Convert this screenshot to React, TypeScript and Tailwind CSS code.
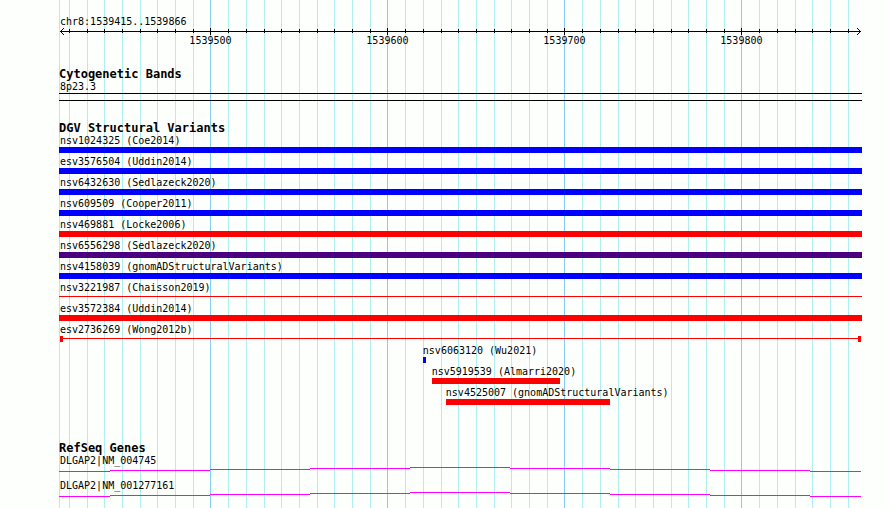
import React from "react";

interface Variant {
  name: string;
  color: string;
  start?: number;
  end?: number;
  shape?: "bar" | "line" | "capped";
}

const REGION_START = 1539415;
const REGION_END = 1539866;
const PANEL_WIDTH = 803;
const MAP_WIDTH = 800;

// Percentage offset of a base position inside the panel
const position = (bp: number) => {
  const scale = MAP_WIDTH / (REGION_END - REGION_START + 1);
  return ((1 + (bp - REGION_START) * scale) / PANEL_WIDTH) * 100;
};

const ticks: number[] = [];
for (let bp = 1539420; bp <= REGION_END; bp += 10) {
  ticks.push(bp);
}

const isMajor = (bp: number) => bp % 100 === 0;

const variants: Variant[] = [
  { name: "nsv1024325 (Coe2014)", color: "bg-[#0000ff]" },
  { name: "esv3576504 (Uddin2014)", color: "bg-[#0000ff]" },
  { name: "nsv6432630 (Sedlazeck2020)", color: "bg-[#0000ff]" },
  { name: "nsv609509 (Cooper2011)", color: "bg-[#0000ff]" },
  { name: "nsv469881 (Locke2006)", color: "bg-[#ff0000]" },
  { name: "nsv6556298 (Sedlazeck2020)", color: "bg-[#4b0082]" },
  { name: "nsv4158039 (gnomADStructuralVariants)", color: "bg-[#0000ff]" },
  { name: "nsv3221987 (Chaisson2019)", color: "bg-[#ff0000]", shape: "line" },
  { name: "esv3572384 (Uddin2014)", color: "bg-[#ff0000]" },
  { name: "esv2736269 (Wong2012b)", color: "bg-[#ff0000]", shape: "capped" },
  { name: "nsv6063120 (Wu2021)", color: "bg-[#0000ff]", start: 1539620, end: 1539621 },
  { name: "nsv5919539 (Almarri2020)", color: "bg-[#ff0000]", start: 1539625, end: 1539697 },
  { name: "nsv4525007 (gnomADStructuralVariants)", color: "bg-[#ff0000]", start: 1539633, end: 1539725 },
];

const genes = ["DLGAP2|NM_004745", "DLGAP2|NM_001277161"];

// x, width and y of every step of the intron line
const intronSteps = [
  [0, 51, 4],
  [51, 100, 3],
  [151, 100, 2],
  [251, 100, 1],
  [351, 100, 0],
  [451, 100, 1],
  [551, 100, 2],
  [651, 100, 3],
  [751, 51, 4],
];

const GridLines: React.FC = () => (
  <div className="absolute inset-0" aria-hidden="true">
    <div className="absolute inset-y-0 left-0 w-px bg-[#afeeee]" />
    {ticks.map((bp) => (
      <div
        key={bp}
        className={`absolute inset-y-0 w-px ${isMajor(bp) ? "bg-[#87ceeb]" : "bg-[#afeeee]"}`}
        style={{ left: `${position(bp)}%` }}
      />
    ))}
  </div>
);

const Arrow: React.FC<{ className: string }> = ({ className }) => (
  <svg
    className={`absolute top-0 h-[7px] w-1 ${className}`}
    viewBox="0 0 4 7"
    fill="black"
    shapeRendering="crispEdges"
    aria-hidden="true"
  >
    <path d="M3 0h1v1H3zM2 1h1v1H2zM1 2h1v1H1zM0 3h2v1H0zM1 4h1v1H1zM2 5h1v1H2zM3 6h1v1H3z" />
  </svg>
);

const Ruler: React.FC = () => (
  <div className="relative h-[19px]">
    <div className="absolute top-[3px] left-px right-0.5 h-px bg-black" />
    <Arrow className="left-px" />
    <Arrow className="right-px rotate-180" />
    {ticks.map((bp) => (
      <div
        key={bp}
        className={`absolute w-px bg-black ${isMajor(bp) ? "top-0 h-[7px]" : "top-px h-1"}`}
        style={{ left: `${position(bp)}%` }}
      />
    ))}
    {ticks.filter(isMajor).map((bp) => (
      <span
        key={bp}
        className="absolute bottom-0 h-3.5 -translate-x-1/2"
        style={{ left: `${position(bp)}%` }}
      >
        {bp}
      </span>
    ))}
  </div>
);

const TrackTitle: React.FC<{ children: React.ReactNode }> = ({ children }) => (
  <h2 className="text-[12px] leading-[10px] font-bold">{children}</h2>
);

const VariantGlyph: React.FC<{ variant: Variant }> = ({ variant }) => {
  if (variant.shape === "line") {
    return (
      <div className="h-1.5 pt-0.5">
        <div className={`h-px ${variant.color}`} />
      </div>
    );
  }

  if (variant.shape === "capped") {
    return (
      <div className="flex h-1.5 px-px">
        <div className={`w-[3px] ${variant.color}`} />
        <div className={`mt-0.5 h-px flex-1 ${variant.color}`} />
        <div className={`w-[3px] ${variant.color}`} />
      </div>
    );
  }

  if (variant.start && variant.end) {
    const width = position(variant.end) - position(variant.start);
    return (
      <div
        className={`h-1.5 ${variant.color}`}
        style={{ marginLeft: `${position(variant.start)}%`, width: `calc(${width}% + 1px)` }}
      />
    );
  }

  return <div className={`h-1.5 ${variant.color}`} />;
};

const VariantRow: React.FC<{ variant: Variant }> = ({ variant }) => (
  <li>
    <p
      className={variant.start ? "h-3.5" : "h-3.5 pl-px"}
      style={variant.start ? { marginLeft: `${position(variant.start)}%` } : undefined}
    >
      {variant.name}
    </p>
    <VariantGlyph variant={variant} />
  </li>
);

const GeneRow: React.FC<{ name: string }> = ({ name }) => (
  <li>
    <p className="h-3.5 pl-px">{name}</p>
    <div className="pr-px">
      <svg
        className="block h-[5px] w-full"
        viewBox="0 0 802 5"
        preserveAspectRatio="none"
        shapeRendering="crispEdges"
        aria-hidden="true"
      >
        {intronSteps.map(([x, width, y]) => (
          <rect key={x} x={x} y={y} width={width} height={1} fill="#ff00ff" />
        ))}
      </svg>
    </div>
  </li>
);

const App: React.FC = () => {
  return (
    <main className="min-h-screen bg-[#fdfffc] pr-7 pl-[59px] font-['DejaVu_Sans_Mono',monospace] text-[10px] leading-4 whitespace-nowrap text-black">
      <div className="relative min-h-screen pt-3.5">
        <GridLines />

        <div className="relative flex flex-col">
          <header>
            <h1 className="h-3.5 pl-px">
              chr8:{REGION_START}..{REGION_END}
            </h1>
            <Ruler />
          </header>

          <section className="mt-[22px]">
            <TrackTitle>Cytogenetic Bands</TrackTitle>
            <p className="h-3.5 pl-px">8p23.3</p>
            <div className="h-2 border-y border-black" />
          </section>

          <section className="mt-[22px]">
            <TrackTitle>DGV Structural Variants</TrackTitle>
            <ul className="flex flex-col gap-px">
              {variants.map((variant) => (
                <VariantRow key={variant.name} variant={variant} />
              ))}
            </ul>
          </section>

          <section className="mt-[38px]">
            <TrackTitle>RefSeq Genes</TrackTitle>
            <ul className="flex flex-col gap-1.5">
              {genes.map((name) => (
                <GeneRow key={name} name={name} />
              ))}
            </ul>
          </section>
        </div>
      </div>
    </main>
  );
};

export default App;
